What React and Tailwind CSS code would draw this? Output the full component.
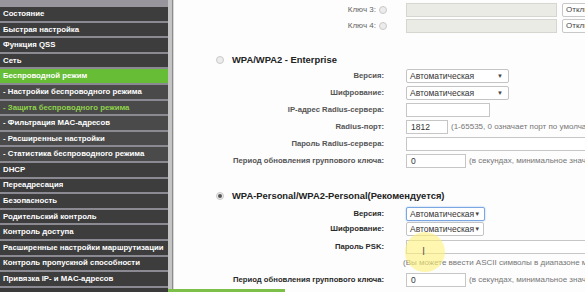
const menu = [
  { t: "Состояние" },
  { t: "Быстрая настройка" },
  { t: "Функция QSS" },
  { t: "Сеть" },
  { t: "Беспроводной режим", active: true },
  { t: "- Настройки беспроводного режима", sub: true },
  { t: "- Защита беспроводного режима", sub: true, current: true },
  { t: "- Фильтрация MAC-адресов", sub: true },
  { t: "- Расширенные настройки", sub: true },
  { t: "- Статистика беспроводного режима", sub: true },
  { t: "DHCP" },
  { t: "Переадресация" },
  { t: "Безопасность" },
  { t: "Родительский контроль" },
  { t: "Контроль доступа" },
  { t: "Расширенные настройки маршрутизации" },
  { t: "Контроль пропускной способности" },
  { t: "Привязка IP- и MAC-адресов" },
];

const Radio = ({ checked }) => (
  <span className="w-[8px] h-[8px] rounded-full border border-[#c9c9c9] bg-[#ececec] flex items-center justify-center shrink-0">
    {checked && <span className="w-[4px] h-[4px] rounded-full bg-[#555]" />}
  </span>
);

const Select = ({ w, focus }) => (
  <div
    className={`${w} h-full flex items-center justify-between pl-[3px] pr-[5px] bg-white rounded-[2px] text-[8.5px] text-[#333] ${
      focus ? "border border-[#7aa6e2] shadow-[0_0_2px_#9cc0ef]" : "border border-[#c4c4c4]"
    }`}
  >
    <span>Автоматическая</span>
    <span className="text-[6px] text-[#444]">▼</span>
  </div>
);

const Row = ({ label, mt, dim, children }) => (
  <div className={`flex items-center h-[14px] ${mt}`}>
    <div className={`w-[210px] shrink-0 text-right text-[7.7px] font-bold ${dim ? "text-[#555]" : "text-[#2a2a2a]"}`}>{label}</div>
    <div className="ml-[22px] h-full flex items-center whitespace-nowrap">{children}</div>
  </div>
);

const KeyRow = ({ label, mt }) => (
  <div className={`flex items-center h-[14px] ${mt}`}>
    <div className="w-[202px] shrink-0 text-right text-[8px] text-[#666]">{label}</div>
    <div className="ml-[3px]"><Radio /></div>
    <div className="ml-[19px] w-[151px] h-full bg-[#ebebe6] border border-[#d6d6d0] shrink-0" />
    <div className="ml-[5px] w-[60px] h-full bg-white border border-[#c8c8c8] rounded-[2px] text-[8px] text-[#444] pl-[3px] flex items-center shrink-0">Отключено</div>
  </div>
);

const Title = ({ children, mt, checked }) => (
  <div className={`flex items-center h-[12px] pl-[42px] ${mt}`}>
    <Radio checked={checked} />
    <span className="ml-[8px] text-[9.4px] font-bold text-[#222] whitespace-nowrap">{children}</span>
  </div>
);

const Input = ({ w, value }) => (
  <div className={`${w} h-full bg-white border border-[#c6c6c6] shrink-0 text-[8.5px] text-[#333] pl-[4px] flex items-center`}>{value}</div>
);

const Hint = ({ children }) => <span className="ml-[3px] text-[8px] text-[#777]">{children}</span>;

export default function App() {
  return (
    <div className="relative w-[585px] h-[292px] overflow-hidden flex bg-[#fdfdfd]" style={{ fontFamily: '"Liberation Sans", Arial, sans-serif' }}>
      <div className="flex shrink-0 h-full">
        <div className="w-[168px] h-full flex flex-col bg-[#3a3a3a]">
          <div className="h-[7px] bg-[#98969c] shrink-0" />
          {menu.map((m) => (
            <div
              key={m.t}
              className={`h-[15.6px] shrink-0 border-b-2 border-[#8b8991] pl-[3px] flex items-center text-[7.8px] font-bold whitespace-nowrap text-white ${
                m.active ? "bg-[#67bd36]" : m.sub ? "bg-[#4a4a4a]" : "bg-[#3d3d3d]"
              }`}
            >
              <span className={m.current ? "text-[#8fd34a]" : ""}>{m.t}</span>
            </div>
          ))}
        </div>
        <div className="w-[4px] h-full bg-[#c4c4c4]" />
        <div className="w-[1px] h-full bg-[#8a8a8a]" />
        <div className="w-[1px] h-full bg-[#d8d8d8]" />
      </div>

      <div className="relative flex-1 overflow-hidden">
        <KeyRow label="Ключ 3:" mt="mt-[3px]" />
        <KeyRow label="Ключ 4:" mt="mt-[2px]" />

        <Title mt="mt-[21px]">WPA/WPA2 - Enterprise</Title>
        <Row label="Версия:" mt="mt-[3px]" dim><Select w="w-[103px]" /></Row>
        <Row label="Шифрование:" mt="mt-[3px]" dim><Select w="w-[103px]" /></Row>
        <Row label="IP-адрес Radius-сервера:" mt="mt-[3px]" dim><Input w="w-[84px]" /></Row>
        <Row label="Radius-порт:" mt="mt-[3px]" dim>
          <Input w="w-[42px]" value="1812" />
          <Hint>(1-65535, 0 означает порт по умолчанию)</Hint>
        </Row>
        <Row label="Пароль Radius-сервера:" mt="mt-[3px]" dim><Input w="w-[200px]" /></Row>
        <Row label="Период обновления группового ключа:" mt="mt-[3px]" dim>
          <Input w="w-[60px]" value="0" />
          <Hint>(в секундах, минимальное значение 30, 0 - отключено)</Hint>
        </Row>

        <Title mt="mt-[22px]" checked>WPA-Personal/WPA2-Personal(Рекомендуется)</Title>
        <Row label="Версия:" mt="mt-[5px]"><Select w="w-[79px]" focus /></Row>
        <Row label="Шифрование:" mt="mt-[1px]"><Select w="w-[78px]" /></Row>
        <Row label="Пароль PSK:" mt="mt-[4px]"><Input w="w-[200px]" /></Row>
        <div className="h-[10px] mt-[4px] pl-[229px] flex items-center text-[8px] text-[#777] whitespace-nowrap">
          (Вы можете ввести ASCII символы в диапазоне между 8 и 63)
        </div>
        <Row label="Период обновления группового ключа:" mt="mt-[5px]">
          <Input w="w-[60px]" value="0" />
          <Hint>(в секундах, минимальное значение 30, 0 - отключено)</Hint>
        </Row>

        <div className="absolute left-[231px] top-[232px] w-[40px] h-[40px] rounded-full bg-[#fff27a]/60" />
        <div className="absolute left-[248px] top-[246px] text-[11px] text-[#666] leading-none">I</div>
      </div>

      <div className="absolute left-[168px] bottom-0 w-[117px] h-[3px] bg-[#7cc04a]" />
    </div>
  );
}
